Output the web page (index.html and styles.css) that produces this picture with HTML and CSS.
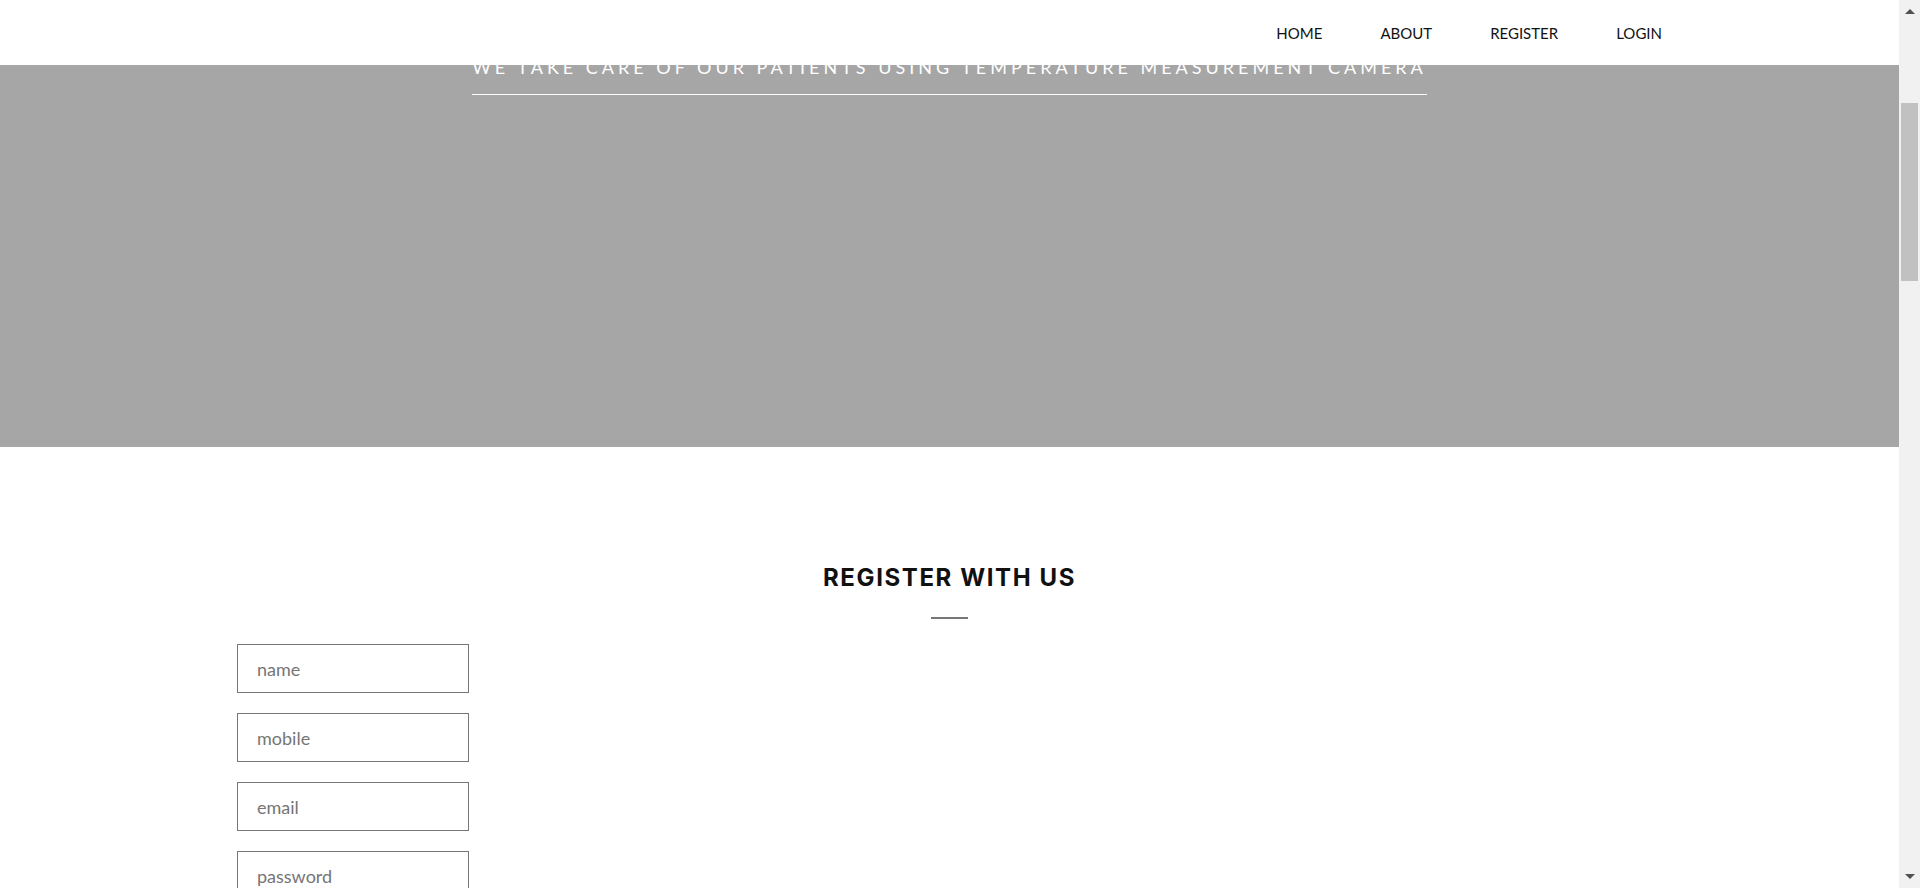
FILE: index.html
```html
<!DOCTYPE html>
<html lang="en">
<head>
<meta charset="utf-8">
<title>Register</title>
<link rel="stylesheet" href="styles.css">
</head>
<body>
<header class="topbar">
  <nav class="topbar-inner">
    <a class="nav-link" href="#">HOME</a>
    <a class="nav-link" href="#">ABOUT</a>
    <a class="nav-link" href="#">REGISTER</a>
    <a class="nav-link" href="#">LOGIN</a>
  </nav>
</header>
<section class="hero">
  <p class="hero-tagline">WE TAKE CARE OF OUR PATIENTS USING TEMPERATURE MEASUREMENT CAMERA</p>
</section>
<section class="register">
  <div class="container">
    <h2 class="section-title">REGISTER WITH US</h2>
    <span class="section-rule"></span>
    <form class="register-form">
      <input class="field" type="text" placeholder="name">
      <input class="field" type="text" placeholder="mobile">
      <input class="field" type="email" placeholder="email">
      <input class="field" type="password" placeholder="password">
      <button class="submit" type="button">REGISTER</button>
    </form>
  </div>
</section>
<div class="scrollbar" aria-hidden="true">
  <span class="sb-btn sb-up"></span>
  <span class="sb-track"><span class="sb-thumb"></span></span>
  <span class="sb-btn sb-down"></span>
</div>
<script src="script.js"></script>
</body>
</html>
```

FILE: styles.css
```css
html, body {
  margin: 0;
  padding: 0;
}
html {
  scrollbar-width: none;
}
body {
  margin-right: 21px;
  font-family: "Lato", "Liberation Sans", sans-serif;
  background: #fff;
  color: #111;
}

/* window scrollbar */
.scrollbar {
  position: fixed;
  top: 0;
  right: 0;
  width: 21px;
  height: 100vh;
  background: #f1f1f1;
  display: flex;
  flex-direction: column;
  z-index: 20;
}
.sb-btn {
  height: 21px;
  flex: none;
  display: flex;
  align-items: center;
  justify-content: center;
}
.sb-up::before,
.sb-down::before {
  content: "";
  width: 0;
  height: 0;
  border-left: 5px solid transparent;
  border-right: 5px solid transparent;
}
.sb-up::before {
  border-bottom: 5px solid #505050;
  margin-top: 2px;
}
.sb-down::before {
  border-top: 5px solid #505050;
  margin-top: -2px;
}
.sb-track {
  flex: 1;
  padding: 0 2px;
}
.sb-thumb {
  display: block;
  margin-top: 82px;
  height: 178px;
  background: #c1c1c1;
}

.topbar {
  position: fixed;
  top: 0;
  left: 0;
  right: 21px;
  height: 65px;
  background: #fff;
  z-index: 10;
}
.topbar-inner {
  width: 1425px;
  height: 100%;
  margin: 0 auto;
  display: flex;
  justify-content: flex-end;
  align-items: center;
  gap: 58px;
}
.nav-link {
  font-size: 15px;
  color: #111;
  text-decoration: none;
  line-height: 20px;
}

.hero {
  height: 856px;
  background: #a6a6a6;
  display: flex;
  flex-direction: column;
  align-items: center;
  box-sizing: border-box;
  padding-top: 466px;
}
.hero-tagline {
  margin: 0;
  font-size: 18px;
  line-height: 1.2;
  letter-spacing: 4px;
  color: #fff;
  padding-bottom: 15px;
  border-bottom: 1px solid #fff;
}

.register {
  min-height: 3364px;
  box-sizing: border-box;
  padding-top: 116px;
}
.container {
  width: 1425px;
  margin: 0 auto;
  display: flex;
  flex-direction: column;
}
.section-title {
  margin: 0;
  text-align: center;
  font-family: "Inter", "DejaVu Sans", sans-serif;
  font-weight: 700;
  font-size: 24px;
  line-height: 29px;
  letter-spacing: 1.6px;
  color: #111;
}
.section-rule {
  align-self: center;
  width: 37px;
  height: 2px;
  background: #777;
  margin-top: 25px;
  margin-bottom: 25px;
}
.register-form {
  display: flex;
  flex-direction: column;
  align-items: flex-start;
  gap: 20px;
}
.field {
  width: 232px;
  height: 49px;
  box-sizing: border-box;
  border: 1px solid #777;
  border-radius: 0;
  padding: 0 0 0 19px;
  font-family: "Lato", "Liberation Sans", sans-serif;
  font-size: 18px;
  color: #333;
  outline: none;
}
.field::placeholder {
  color: #757575;
}
.submit {
  height: 49px;
  padding: 0 30px;
  border: 1px solid #777;
  background: #fff;
  font-family: "Lato", "Liberation Sans", sans-serif;
  font-size: 16px;
}
```

FILE: script.js
```js
if ('scrollRestoration' in history) { history.scrollRestoration = 'manual'; }
window.scrollTo(0, 409);
window.addEventListener('load', function () { window.scrollTo(0, 409); });
```
